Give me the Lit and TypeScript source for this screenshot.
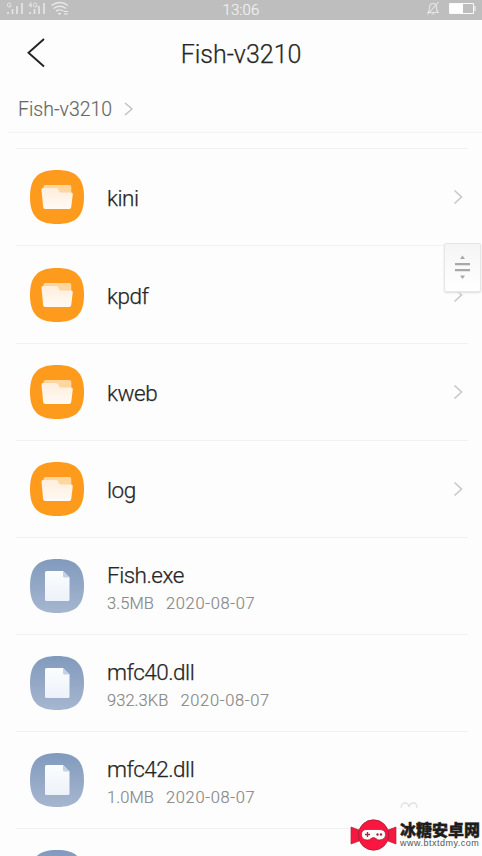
import { LitElement, html, css, svg } from "lit";
import { customElement } from "lit/decorators.js";

interface Entry { name: string; size?: string; date?: string; }

const entries: Entry[] = [
  { name: "kini" },
  { name: "kpdf" },
  { name: "kweb" },
  { name: "log" },
  { name: "Fish.exe", size: "3.5MB", date: "2020-08-07" },
  { name: "mfc40.dll", size: "932.3KB", date: "2020-08-07" },
  { name: "mfc42.dll", size: "1.0MB", date: "2020-08-07" },
  { name: "", size: "", date: "" },
];

const squircle = "M27 0C46 0 54 8 54 27S46 54 27 54 0 46 0 27 8 0 27 0Z";

@customElement("status-bar")
class StatusBar extends LitElement {
  static styles = css`
    :host { display: grid; grid-template-columns: 1fr auto 1fr; align-items: center; height: 20px; background: #bebebe; color: #f4f4f4; font: 350 15px/20px Roboto, "Liberation Sans", sans-serif; }
    svg { display: block; }
    .right { justify-self: end; }
    .time { letter-spacing: 0.1px; -webkit-text-stroke: .15px; }
  `;
  render() {
    return html`
      <svg width="72" height="20" viewBox="0 0 72 20" fill="none" stroke="#e8e8e8">
        <g stroke-width="1.6">
          <path d="M8 14v-2M12.500 14V9M17 14V6M22 14V3"/>
          <path d="M30 14v-2M34.500 14V9M39 14V6M44 14V3"/>
        </g>
        <path d="M11 3.500Q7.500 2 7.500 5T11 6.500V5.200H9.500M31 2.500l-2 3.200h3M31 2.500V7.500M37 3.500Q33.500 2 33.500 5T37 6.500V5.200H35.500" stroke-width=".9"/>
        <path d="M51.500 5.500Q60-.5 68 5.500M53.500 8.500Q60 4 66 8.500M56 11.200Q60 8.500 63.500 11.200" stroke-width="1.4"/>
        <path d="M57.500 13h4l-2 2zM64 11h4v1h-4zM64 13.500h4v1h-4z" fill="#ededed" stroke="none"/>
      </svg>
      <span class="time">13:06</span>
      <svg class="right" width="60" height="20" viewBox="422 0 60 20" fill="none" stroke="#e6e6e6">
        <path d="M428 12.500Q429.500 11 429.500 8Q429.500 3.500 433 3.500Q436.500 3.500 436.500 8Q436.500 11 438 12.500ZM431.500 14h3M427.500 14.500L438.500 2" stroke-width="1.1"/>
        <path d="M449.500 3.500h24v10h-24zM475 6v5" stroke="#fafafa"/>
        <path d="M450 4h13v9h-13z" fill="#fff" stroke="none"/>
      </svg>`;
  }
}

@customElement("file-row")
class FileRow extends LitElement {
  static properties = { entry: { attribute: false } };
  declare entry: Entry;
  static styles = css`
    :host { display: flex; align-items: center; box-sizing: border-box; height: 97.15px; margin: 0 14px 0 16px; padding: 0 4px 0 14px; border-top: 1px solid #f1f1f1; font-family: Roboto, "Liberation Sans", sans-serif; font-weight: 300; }
    svg { display: block; flex: none; }
    .text { flex: 1; margin-left: 23px; padding-top: 2px; }
    .name { font-size: 22.500px; line-height: 28px; color: #262626; letter-spacing: -.5px; -webkit-text-stroke: .25px #262626; }
    .meta { display: flex; gap: 12px; font-size: 16.500px; line-height: 22px; margin-top: 4px; margin-bottom: -2px; color: #868686; letter-spacing: .05px; -webkit-text-stroke: .15px #868686; }
    .date { letter-spacing: .68px; }
  `;
  folder() {
    return svg`<defs><linearGradient id="f" x2="0" y2="1"><stop stop-color="#ffeedb"/><stop offset="1" stop-color="#fffaf5"/></linearGradient></defs>
      <path d=${squircle} fill="#ff9b1c"/>
      <path d="M15.500 15h24q1.800 0 1.800 1.800V28H13.500V17q0-2 2-2Z" fill="#ffd6a0"/>
      <path d="M13 18H26.500q1.300 0 1.800 1.500l.7 2q.4 1 1.600 1H41.200q1.800 0 1.600 1.800L41.200 37.200q-.3 1.800-2 1.800H15.200q-1.800 0-2-1.800L11.500 20q-.2-2 1.500-2Z" fill="url(#f)"/>`;
  }
  file() {
    return svg`<defs><linearGradient id="b" x2="0" y2="1"><stop stop-color="#819abd"/><stop offset="1" stop-color="#a6b6cf"/></linearGradient><linearGradient id="p" x2="0" y2="1"><stop stop-color="#fbfdff"/><stop offset="1" stop-color="#edf2f9"/></linearGradient></defs>
      <path d=${squircle} fill="url(#b)"/>
      <path d="M16.500 12h16.500l6.500 6.500v22q0 1.500-1.500 1.500H16.500q-1.500 0-1.500-1.500V13.500q0-1.500 1.500-1.500Z" fill="url(#p)"/>
      <path d="M33 12l6.500 6.500H34.500q-1.500 0-1.500-1.500Z" fill="#c3d1e4"/>`;
  }
  render() {
    const e = this.entry;
    const isFile = e.size !== undefined;
    return html`
      <svg width="54" height="54" viewBox="0 0 54 54">${isFile ? this.file() : this.folder()}</svg>
      <div class="text">
        <div class="name">${e.name}</div>
        ${isFile ? html`<div class="meta"><span>${e.size}</span><span class="date">${e.date}</span></div>` : ""}
      </div>
      ${isFile ? "" : html`<svg width="11" height="16" viewBox="0 0 11 16" fill="none" stroke="#c8c8c8" stroke-width="1.6"><path d="M1.500 1.500L8.500 8 1.500 14.500"/></svg>`}`;
  }
}

@customElement("app-root")
class AppRoot extends LitElement {
  static styles = css`
    :host { display: block; position: relative; height: 856px; overflow: hidden; background: #fdfdfd; font-family: Roboto, "Liberation Sans", sans-serif; font-weight: 300; }
    svg { display: block; }
    header { display: grid; grid-template-columns: 74px 1fr 74px; align-items: center; height: 66px; }
    .back { margin-left: 26px; }
    h1 { margin: 0; padding-top: 3px; text-align: center; font-size: 25px; line-height: 30px; font-weight: 300; color: #262626; -webkit-text-stroke: .25px #262626; }
    .crumbs { display: flex; align-items: center; gap: 11px; box-sizing: border-box; height: 47px; margin-left: 8px; padding-left: 10px; border-bottom: 1px solid #f3f3f3; font-size: 19.500px; color: #666; -webkit-text-stroke: .15px #666; }
    .crumbs span { padding-top: 1px; }
    .list { padding-top: 15.300px; }
    .scroller { position: absolute; left: 444px; top: 243px; width: 35px; height: 47px; border: 1px solid #e6e6e6; border-radius: 2px; background: linear-gradient(#f5f5f5, #fff); box-shadow: 0 1px 2px #ddd; }
    .ghost { position: absolute; left: 400px; top: 801px; }
    .brand { position: absolute; left: 350px; top: 816px; display: flex; gap: 3px; }
    .site { font-family: "Noto Sans CJK SC", sans-serif; font-weight: 900; font-size: 16px; line-height: 18px; color: #1d1d1d; padding-top: 4px; -webkit-text-stroke: .4px #1d1d1d; white-space: nowrap; }
    .url { font: 400 9px/10px "Liberation Sans", sans-serif; letter-spacing: .5px; color: #555; white-space: nowrap; }
  `;
  render() {
    return html`
      <status-bar></status-bar>
      <header>
        <svg class="back" width="20" height="32" viewBox="0 0 20 32" fill="none" stroke="#222" stroke-width="1.900"><path d="M18 2L2.500 15.800 18 29.500"/></svg>
        <h1>Fish-v3210</h1>
      </header>
      <nav class="crumbs"><span>Fish-v3210</span>
        <svg width="11" height="14" viewBox="0 0 11 14" fill="none" stroke="#c0c0c0" stroke-width="1.400"><path d="M2 1L9 7 2 13"/></svg>
      </nav>
      <main class="list">${entries.map((e) => html`<file-row .entry=${e}></file-row>`)}</main>
      <div class="scroller">
        <svg width="35" height="47" viewBox="445 244 35 47" fill="#a8a8a8"><path d="M462.500 255.500l2.500 3.500h-5zM462.500 279l2.500-3.500h-5zM455 263h15v2.300h-15zM455 269h15v2.300h-15z"/></svg>
      </div>
      <svg class="ghost" width="19" height="9" viewBox="0 0 19 9" fill="none" stroke="#e2e2e2" stroke-width="1.300"><path d="M1 7Q1.500 2 5 2T9 6Q10 2 13.500 2T17 7"/></svg>
      <div class="brand">
        <svg width="47" height="36" viewBox="350 816 47 36">
          <path d="M351 827l8 3v11l-8 3zM396 827l-8 3v11l8 3z" fill="#f5173f" stroke="#b5213b" stroke-width=".7"/>
          <circle cx="373.500" cy="835" r="15.200" fill="#fb1640" stroke="#9f2037" stroke-width=".8"/>
          <path d="M368 829.500H379Q385.500 829.500 385.500 834.500T379.500 840Q377 840 376 838.500Q373.500 836.500 371 838.500Q370 840 367.500 840Q361.500 840 361.500 834.500T368 829.500Z" fill="#fff" stroke="#8e2436" stroke-width=".7"/>
          <path d="M365 834.500h5M367.500 832v5" stroke="#a32a3e" stroke-width="1.300"/>
          <circle cx="377.500" cy="834.500" r="1.200" fill="#a32a3e"/><circle cx="381" cy="834.500" r="1.200" fill="#a32a3e"/>
        </svg>
        <div><div class="site">冰糖安卓网</div><div class="url">www.btxtdmy.com</div></div>
      </div>`;
  }
}
